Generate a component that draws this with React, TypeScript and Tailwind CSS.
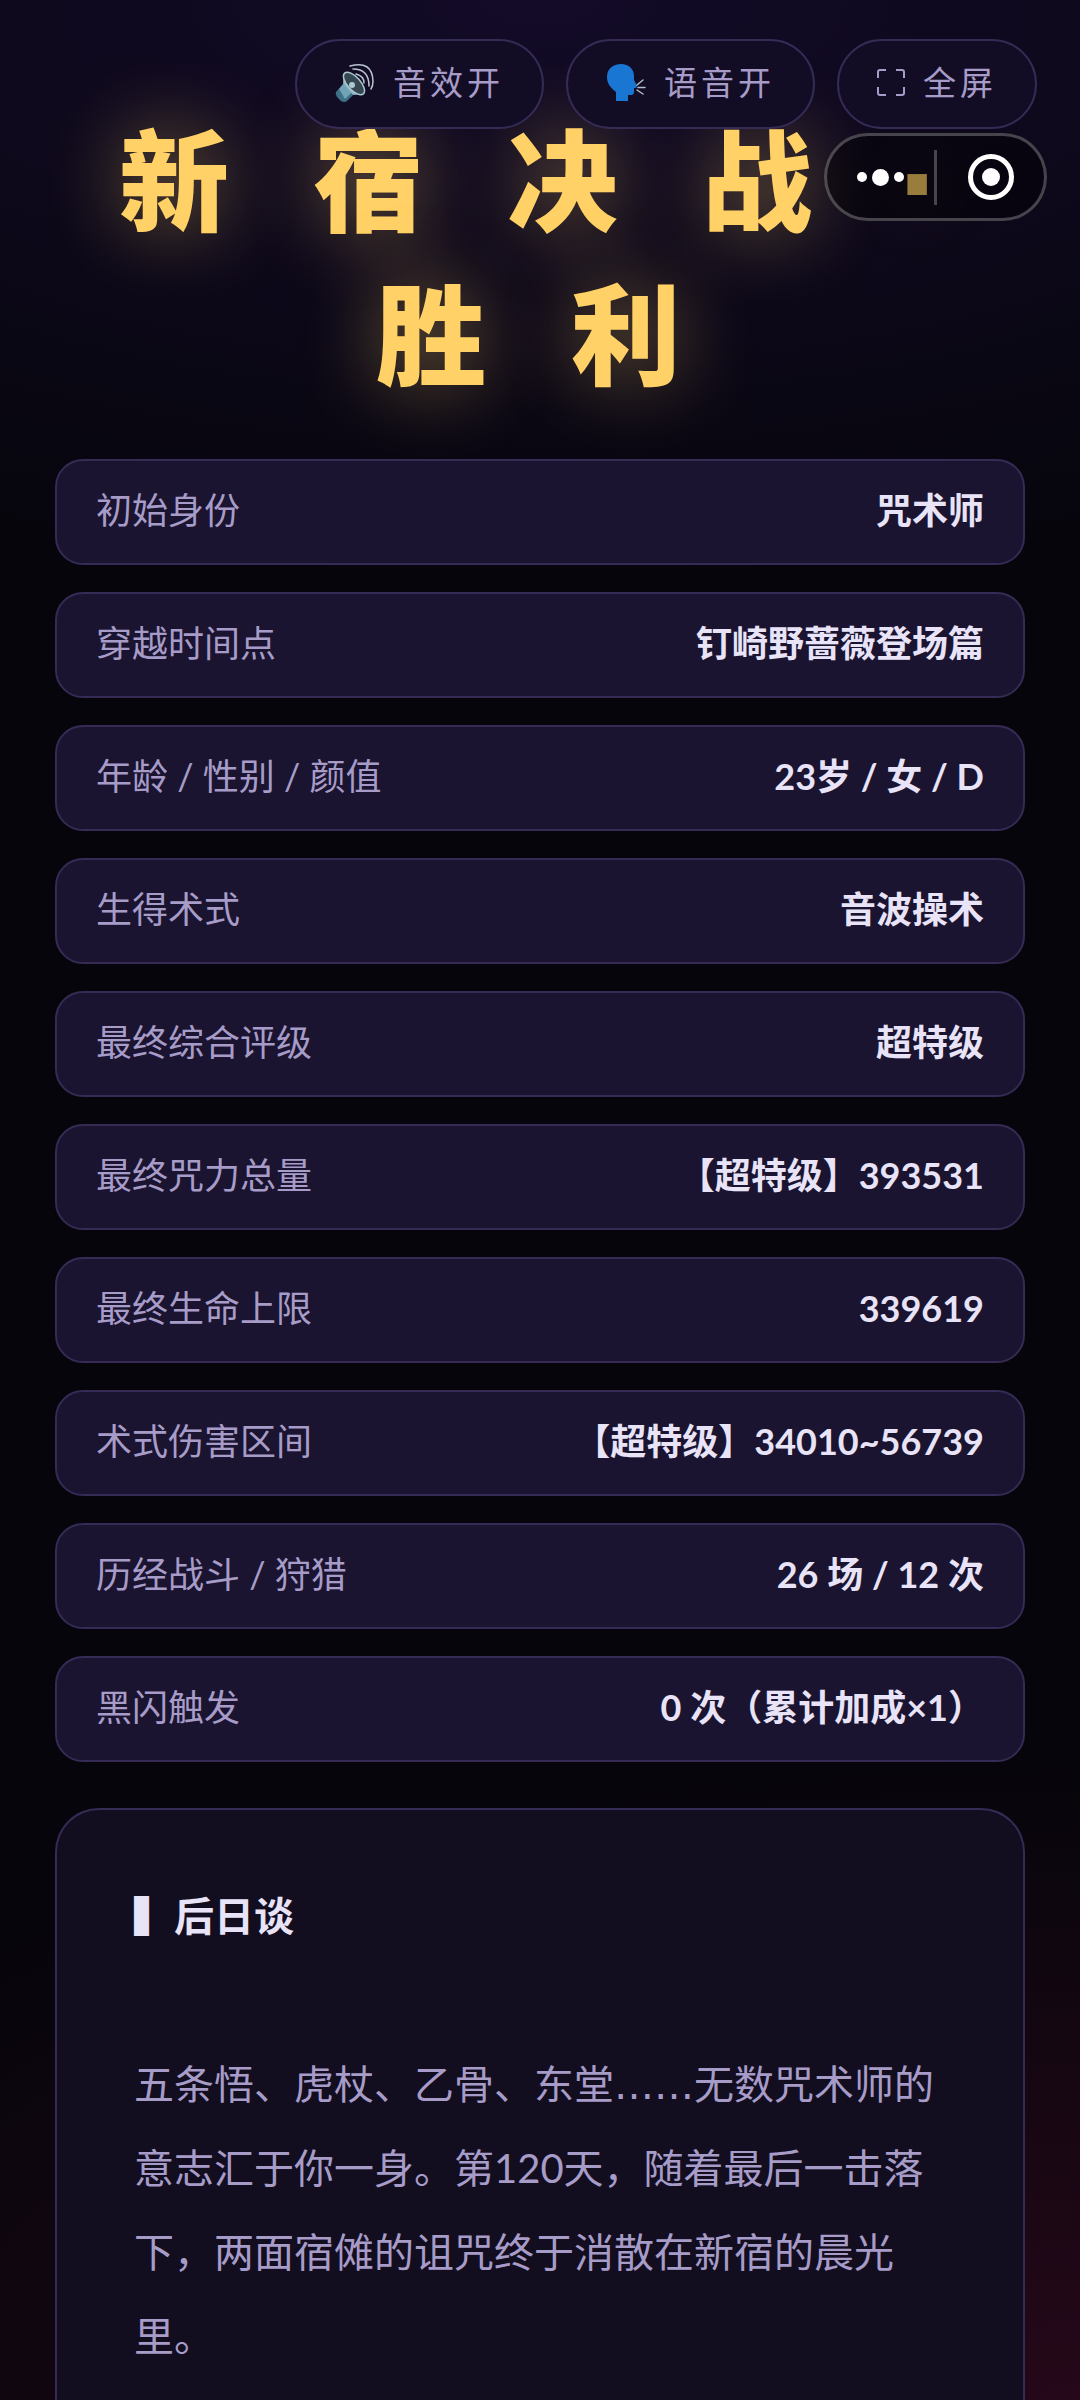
import { useState } from 'react';

interface Stat {
    label: string;
    value: string;
}

const stats: Stat[] = [
    { label: '初始身份', value: '咒术师' },
    { label: '穿越时间点', value: '钉崎野蔷薇登场篇' },
    { label: '年龄 / 性别 / 颜值', value: '23岁 / 女 / D' },
    { label: '生得术式', value: '音波操术' },
    { label: '最终综合评级', value: '超特级' },
    { label: '最终咒力总量', value: '【超特级】393531' },
    { label: '最终生命上限', value: '339619' },
    { label: '术式伤害区间', value: '【超特级】34010~56739' },
    { label: '历经战斗 / 狩猎', value: '26 场 / 12 次' },
    { label: '黑闪触发', value: '0 次（累计加成×1）' },
];

const pill =
    'flex h-[90px] items-center gap-[18px] rounded-full border-2 border-[#352b54] bg-[#130c25] pr-[38px] pl-[38px] pb-[2px] text-[33px] tracking-[4px] text-[#a79cc8]';

function SpeakerIcon() {
    return (
        <svg className="h-10 w-10" viewBox="0 0 40 40" fill="none" aria-hidden="true">
            <path d="M1 29 L9 20 L19 31 L12 38 Q9 40 6 38 L2 34 Q0 31 1 29Z" fill="#3f7186" />
            <path d="M4 26 L9 20 L17 29 L10 36Z" fill="#6fa3b5" />
            <path d="M8 20 L9 10 L29 31 L18 32Z" fill="#8fb4c1" />
            <ellipse cx="19" cy="20.500" rx="6.500" ry="14" transform="rotate(-42 19 20.500)" fill="#37474f" stroke="#a9c8d3" strokeWidth="1.500" />
            <circle cx="17" cy="22" r="3" fill="#a9cbd6" />
            <g stroke="#b8c4ce" strokeWidth="1.500" strokeLinecap="round">
                <path d="M21 11 Q29 13 29 20" />
                <path d="M18 6 Q34 6 34 23" />
                <path d="M15 3 Q37 -3 38 18 Q38 23 36 26" />
            </g>
        </svg>
    );
}

function SpeakingHeadIcon() {
    return (
        <svg className="h-10 w-10" viewBox="0 0 40 40" fill="none" aria-hidden="true">
            <path
                d="M15 1 C23 1 28 6 28 13 L28 17 L31 23 Q31 25 28 25 L28 29 Q28 32 25 32 L22 32 L22 38 L10 38 L10 29 C5 25 1 21 1 14 C1 6 7 1 15 1Z"
                fill="#1976d2"
            />
            <path d="M31 22 L37 17 M32 24.500 L39 24.500 M31 27 L37 31" stroke="#b0bec5" strokeWidth="1.500" strokeLinecap="round" />
        </svg>
    );
}

function FullscreenIcon() {
    return (
        <svg className="h-7 w-7" viewBox="0 0 28 28" fill="none" stroke="currentColor" strokeWidth="2" aria-hidden="true">
            <path d="M1 9 V3 Q1 1 3 1 H9 M19 1 H25 Q27 1 27 3 V9 M27 18 V24 Q27 26 25 26 H19 M9 26 H3 Q1 26 1 24 V18" />
        </svg>
    );
}

export default function App() {
    const [soundOn, setSoundOn] = useState(true);
    const [voiceOn, setVoiceOn] = useState(true);

    const toggleFullscreen = () => {
        if (document.fullscreenElement) {
            document.exitFullscreen();
        } else {
            document.documentElement.requestFullscreen();
        }
    };

    return (
        <div className="relative flex min-h-screen flex-col bg-[#06050b] bg-[radial-gradient(ellipse_130%_25%_at_50%_0%,#130b28_0%,transparent_100%),radial-gradient(ellipse_145%_27%_at_100%_100%,#250819_0%,transparent_100%)] px-[55px] pt-[108px] font-[Lato,'Noto_Sans_CJK_SC',sans-serif]">
            {/* Floating controls, over the title */}
            <div className="absolute top-[39px] right-[43px] z-10 flex gap-[22px]">
                <button type="button" className={pill} onClick={() => setSoundOn(!soundOn)}>
                    <SpeakerIcon />
                    {soundOn ? '音效开' : '音效关'}
                </button>
                <button type="button" className={pill} onClick={() => setVoiceOn(!voiceOn)}>
                    <SpeakingHeadIcon />
                    {voiceOn ? '语音开' : '语音关'}
                </button>
                <button type="button" className={pill} onClick={toggleFullscreen}>
                    <FullscreenIcon />
                    全屏
                </button>
            </div>

            {/* Mini program capsule */}
            <div className="absolute top-[133px] right-[33px] z-20 flex h-[88px] w-[223px] items-center rounded-full border-3 border-white/25 bg-black/40">
                <button type="button" aria-label="更多" className="flex h-full flex-1 items-center justify-center gap-[5px]">
                    <span className="h-[10px] w-[10px] rounded-full bg-white" />
                    <span className="h-[17px] w-[17px] rounded-full bg-white" />
                    <span className="h-[10px] w-[10px] rounded-full bg-white" />
                </button>
                <span className="h-[55px] w-[3px] bg-white/25" />
                <button type="button" aria-label="关闭" className="flex h-full flex-1 items-center justify-center">
                    <span className="flex h-[46px] w-[46px] items-center justify-center rounded-full border-[5px] border-white">
                        <span className="h-[18px] w-[18px] rounded-full bg-white" />
                    </span>
                </button>
            </div>

            <h1 className="text-center font-['DejaVu_Sans','Noto_Sans_CJK_SC',sans-serif] text-[110px] leading-[154px] font-black tracking-[23px] text-[#ffd166] [text-shadow:0_0_80px_rgba(255,209,102,0.45)]">
                新 宿 决 战 · 胜 利
            </h1>

            <dl className="mt-[43px] flex flex-col gap-[27px]">
                {stats.map((stat) => (
                    <div
                        key={stat.label}
                        className="flex h-[106px] items-center justify-between rounded-[28px] border-2 border-[#352b54] bg-[#1a1430] px-[39px] pb-1 text-[36px]"
                    >
                        <dt className="text-[#a79cc8]">{stat.label}</dt>
                        <dd className="font-bold text-[#e8e3f7]">{stat.value}</dd>
                    </div>
                ))}
            </dl>

            <section className="mt-[46px] grow rounded-t-[44px] border-2 border-b-0 border-[#352b54] bg-[#120e20] px-[77px] pt-16 text-[40px] leading-[84px]">
                <h2 className="mb-[84px] font-semibold text-[#e8e3f7]">▍后日谈</h2>
                <p className="text-[#a79cc8]">
                    五条悟、虎杖、乙骨、东堂<span className="font-['DejaVu_Sans',sans-serif] leading-none">……</span>无数咒术师的意志汇于你一身。第120天，随着最后一击落下，两面宿傩的诅咒终于消散在新宿的晨光里。
                </p>
            </section>
        </div>
    );
}
